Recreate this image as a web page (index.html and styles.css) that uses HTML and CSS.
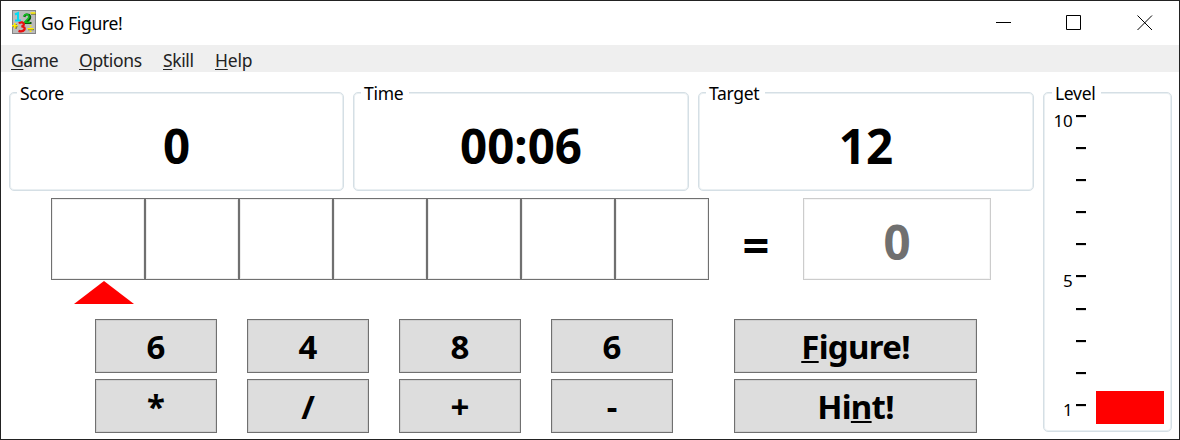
FILE: index.html
```html
<!DOCTYPE html>
<html lang="en">
<head>
<meta charset="utf-8">
<title>Go Figure!</title>
<link rel="stylesheet" href="styles.css">
</head>
<body>
<div class="window">
  <header class="titlebar">
    <svg class="app-icon" viewBox="0 0 24 24">
      <rect x=".5" y=".5" width="23" height="23" fill="#bcbcbc" stroke="#858585"/>
      <path d="M3 4.500L6 3V10M3 10.500H9" fill="none" stroke="#00dcf5" stroke-width="2"/>
      <path d="M12.500 7Q13 4 15.500 4.500Q19 5 18 8.500L14 13H19.500" fill="none" stroke="#085808" stroke-width="2"/>
      <path d="M11.500 6.500Q12.500 4 14.500 4.200Q17.500 4.500 16.500 8L12.500 12.200H18" fill="none" stroke="#10c020" stroke-width="1.600"/>
      <path d="M7 13.500Q8 12 10.500 12.500Q13 13.500 11 16L9.500 16.400Q13.500 16.800 12.500 19.500Q10.500 22.300 6.500 20.800" fill="none" stroke="#e81010" stroke-width="2.300"/>
      <path d="M19 4H24M1 16.700H5.500M4 14V19M16 19.700H22" stroke="#555518"/>
      <path d="M18.500 3H23.500M0 15.700H5.500M2.800 13V18.500M15.500 18.700H21.500" stroke="#fff000" stroke-width="1.500"/>
      <path d="M17.700 16H19.500M17.700 21.300H19.500" stroke="#fff000" stroke-width="1.600"/>
    </svg>
    <h1 class="title">Go Figure!</h1>
    <div class="controls">
      <svg viewBox="0 0 16 16"><path d="M0 7.500H15"/></svg>
      <svg viewBox="0 0 16 16"><path d="M.5 .5H14.500V14.500H.5Z"/></svg>
      <svg viewBox="0 0 16 16"><path d="M.5 .5L15 15M15 .5L.5 15"/></svg>
    </div>
  </header>
  <nav class="menu">
    <span class="m-game"><u>G</u>ame</span><span class="m-options"><u>O</u>ptions</span><span class="m-skill"><u>S</u>kill</span><span class="m-help"><u>H</u>elp</span>
  </nav>
  <main class="content">
    <div class="play">
      <div class="stats">
        <section class="group"><h2 class="legend">Score</h2><div class="value">0</div></section>
        <section class="group"><h2 class="legend">Time</h2><div class="value">00:06</div></section>
        <section class="group"><h2 class="legend">Target</h2><div class="value">12</div></section>
      </div>
      <div class="expression">
        <div class="cells"><i></i><i></i><i></i><i></i><i></i><i></i><i></i></div>
        <div class="equals">=</div>
        <div class="result">0</div>
      </div>
      <svg class="pointer" viewBox="0 0 60 23"><path d="M30 0L60 23H0Z"/></svg>
      <div class="pad">
        <button>6</button><button>4</button><button>8</button><button>6</button><button class="wide"><span><u>F</u>igure!</span></button>
        <button>*</button><button>/</button><button>+</button><button>-</button><button class="wide"><span>Hi<u>n</u>t!</span></button>
      </div>
    </div>
    <section class="group level">
      <h2 class="legend">Level</h2>
      <ol class="scale">
        <li><span>10</span></li><li></li><li></li><li></li><li></li><li><span>5</span></li><li></li><li></li><li></li><li><span>1</span></li>
      </ol>
      <div class="meter"></div>
    </section>
  </main>
</div>
</body>
</html>
```
FILE: styles.css
```css
* { box-sizing: border-box; }
body { margin: 0; font-family: "Noto Sans", "Open Sans", sans-serif; color: #000; }
.window { width: 1180px; height: 440px; border: 1px solid #222; background: #fff; display: flex; flex-direction: column; overflow: hidden; }
.titlebar { height: 44px; flex: none; display: flex; align-items: center; padding: 0 27px 0 11px; }
.app-icon { width: 24px; height: 24px; margin-top: -2px; }
.title { font-size: 17.500px; font-weight: 400; margin: 0 0 1px 5px; letter-spacing: -.3px; line-height: 24px; }
.controls { display: flex; gap: 54px; margin-left: auto; }
.controls svg { width: 16px; height: 16px; fill: none; stroke: #000; stroke-width: 1; }
.controls svg:nth-child(2) { margin-right: 1px; }
.controls svg:last-child { margin-right: -1px; }
.menu { height: 27px; flex: none; background: #efefef; display: flex; padding-left: 10px; font-size: 17.500px; letter-spacing: -.4px; line-height: 30px; color: #222; }
.menu span { white-space: nowrap; }
u { text-underline-offset: 2px; text-decoration-thickness: 1px; text-decoration-skip-ink: none; }
.m-game { width: 68px; }
.m-options { width: 84px; letter-spacing: -.3px; }
.m-skill { width: 52px; }
.m-help { letter-spacing: -.2px; }
.content { flex: 1; display: flex; gap: 9px; padding: 20px 7px 7px 8px; }
.play { width: 1025px; display: flex; flex-direction: column; }
.stats { display: grid; grid-template-columns: 335px 336px 336px; gap: 9px; height: 99px; }
.group { position: relative; border: 1px solid #d5dfe5; box-shadow: inset 0 0 0 1px #e9eff2; border-radius: 5px; }
.legend { position: absolute; top: -12px; left: 7px; margin: 0; padding: 0 6px 0 3px; background: #fff; font-size: 17.500px; letter-spacing: -.3px; font-weight: 400; line-height: 24px; white-space: nowrap; }
.value { height: 97px; display: flex; align-items: center; justify-content: center; font-size: 47.500px; font-weight: 700; line-height: 64px; padding-top: 9px; }
.expression { display: flex; height: 82px; margin: 7px 0 0 42px; }
.cells { display: flex; }
.cells i { width: 94px; border: 1px solid #707070; box-shadow: inset 0 0 0 1px #ededed; }
.equals { width: 94px; text-align: center; font-size: 47px; font-weight: 700; line-height: 94px; }
.result { width: 188px; border: 1px solid #ccc; box-shadow: inset 0 0 0 1px #f5f5f5; color: #707070; text-align: center; font-size: 47.500px; font-weight: 700; line-height: 86px; }
.pointer { width: 60px; height: 23px; margin: 1px 0 0 65px; fill: red; }
.pad { display: grid; grid-template-columns: repeat(4, 122px) 243px; grid-template-rows: 54px 54px; column-gap: 30px; row-gap: 6px; margin: 15px 0 0 86px; }
.pad button { font: 700 33px/44px "Noto Sans", "Open Sans", sans-serif; color: #000; background: #ddd; border: 1px solid #707070; box-shadow: inset 0 0 0 1px #cecece; padding: 2px 0 0; margin: 0; }
.pad .wide { margin-left: 31px; width: 243px; letter-spacing: -.7px; }
.pad u { text-decoration-thickness: 2px; }
.level { width: 129px; height: 340px; display: flex; }
.level .legend { left: 8px; }
.scale { list-style: none; margin: 7px 0 0; padding: 0; width: 42px; font-size: 17px; letter-spacing: -.2px; }
.scale li { height: 32.100px; display: flex; justify-content: flex-end; align-items: flex-start; padding-top: 15px; }
.scale li::after { content: ""; width: 10.500px; height: 2px; background: #000; margin-left: 3px; box-shadow: 0 1px #ddd; }
.scale span { line-height: 20px; margin-top: -4px; }
.meter { width: 68.500px; height: 33.500px; margin: auto 0 7px 9.500px; background: red; }
```
